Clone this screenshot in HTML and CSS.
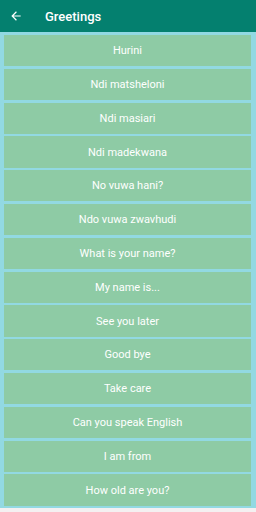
FILE: index.html
```html
<!DOCTYPE html>
<html lang="en">
<head>
  <meta charset="UTF-8" />
  <title>Greetings</title>
  <meta name="viewport" content="width=device-width, initial-scale=1.0">
  <link rel="stylesheet" href="styles.css">
</head>
<body>
  <div class="toolbar">
    <svg class="back" viewBox="0 0 24 24" width="14" height="14">
      <path d="M20 11H7.83l5.59-5.59L12 4l-8 8 8 8 1.41-1.41L7.83 13H20v-2z" fill="#ffffff"/>
    </svg>
    <span class="title">Greetings</span>
  </div>

  <div class="phrase-list">
    <div class="phrase">Hurini</div>
    <div class="phrase">Ndi matsheloni</div>
    <div class="phrase">Ndi masiari</div>
    <div class="phrase">Ndi madekwana</div>
    <div class="phrase">No vuwa hani?</div>
    <div class="phrase">Ndo vuwa zwavhudi</div>
    <div class="phrase">What is your name?</div>
    <div class="phrase">My name is...</div>
    <div class="phrase">See you later</div>
    <div class="phrase">Good bye</div>
    <div class="phrase">Take care</div>
    <div class="phrase">Can you speak English</div>
    <div class="phrase">I am from</div>
    <div class="phrase">How old are you?</div>
  </div>
</body>
</html>
```

FILE: styles.css
```css
body {
  margin: 0;
  font-family: Roboto, "Noto Sans", sans-serif;
  background-color: #f4f0f1;
}
.toolbar {
  height: 32px;
  background-color: #04806f;
  display: flex;
  align-items: center;
  padding-left: 9px;
  color: white;
}
.toolbar .back {
  display: block;
}
.toolbar .title {
  margin-left: 22px;
  font-size: 13px;
  font-weight: 500;
}
.phrase-list {
  background-color: #92d9e2;
  padding: 3px 5px 2px 4px;
  display: flex;
  flex-direction: column;
  gap: 2.5px;
}
.phrase {
  height: 31.3px;
  background-color: #8ecba5;
  color: white;
  font-size: 11px;
  display: flex;
  align-items: center;
  justify-content: center;
}
```
